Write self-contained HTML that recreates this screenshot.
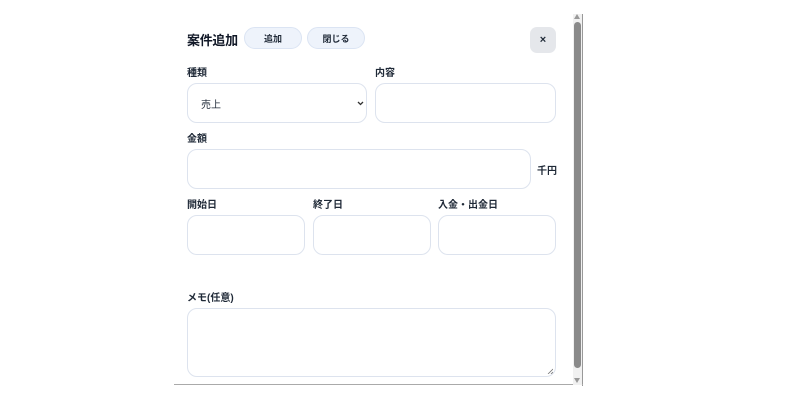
<!DOCTYPE html>
<html><head><meta charset="utf-8"><style>
*{box-sizing:border-box;margin:0;padding:0}
body{width:800px;height:400px;background:#fff;font-family:"Liberation Sans","Noto Sans CJK JP",sans-serif;color:#1f2937;position:relative;overflow:hidden}
.a{position:absolute}
.lbl{font-size:10px;font-weight:bold;color:#1f2937}
.box{position:absolute;border:1px solid #dde3ee;border-radius:10px;background:#fff}
.btn{position:absolute;background:#eef3fb;border:1px solid #dbe4f3;border-radius:11px;font-size:9px;font-weight:bold;display:flex;align-items:center;justify-content:center}
</style></head><body>
<div class="a" style="left:582px;top:14px;width:1px;height:372px;background:#999"></div>
<div class="a" style="left:174px;top:384px;width:409px;height:1px;background:#aaa"></div>
<div class="a" style="left:573px;top:14px;width:9px;height:371px;background:#f1f1f1"></div>
<div class="a" style="left:574px;top:22px;width:7px;height:346px;background:#8a8a8a;border-radius:4px"></div>
<div class="a" style="left:574px;top:14px;width:0;height:0;border-left:3.5px solid transparent;border-right:3.5px solid transparent;border-bottom:5px solid #999"></div>
<div class="a" style="left:574px;top:378px;width:0;height:0;border-left:3.5px solid transparent;border-right:3.5px solid transparent;border-top:5px solid #999"></div>

<div class="a" style="left:187px;top:30px;font-size:13px;font-weight:700;letter-spacing:-0.3px;color:#111827">案件追加</div>
<div class="btn" style="left:244px;top:27px;width:58px;height:22px">追加</div>
<div class="btn" style="left:307px;top:27px;width:58px;height:22px">閉じる</div>
<div class="a" style="left:530px;top:27px;width:26px;height:26px;background:#e5e7eb;border-radius:7px;font-size:11px;font-weight:bold;display:flex;align-items:center;justify-content:center">×</div>

<div class="a lbl" style="left:187px;top:64px">種類</div>
<div class="a lbl" style="left:375px;top:64px">内容</div>
<div class="box" style="left:187px;top:83px;width:180px;height:40px"><span class="a" style="left:13px;top:12px;font-size:10px">売上</span><svg class="a" style="left:169px;top:17px" width="7" height="5" viewBox="0 0 7 5"><path d="M1 1l2.5 2.5L6 1" stroke="#333" stroke-width="1.3" fill="none"/></svg></div>
<div class="box" style="left:375px;top:83px;width:181px;height:40px"></div>

<div class="a lbl" style="left:187px;top:130px">金額</div>
<div class="box" style="left:187px;top:149px;width:344px;height:40px"></div>
<div class="a" style="left:537px;top:162px;font-size:10px;font-weight:bold">千円</div>

<div class="a lbl" style="left:187px;top:196px">開始日</div>
<div class="a lbl" style="left:313px;top:196px">終了日</div>
<div class="a lbl" style="left:438px;top:196px">入金・出金日</div>
<div class="box" style="left:187px;top:215px;width:118px;height:40px"></div>
<div class="box" style="left:313px;top:215px;width:118px;height:40px"></div>
<div class="box" style="left:438px;top:215px;width:118px;height:40px"></div>

<div class="a lbl" style="left:187px;top:289px">メモ(任意)</div>
<div class="box" style="left:187px;top:308px;width:369px;height:69px"><svg class="a" style="right:2px;bottom:2px" width="6" height="6"><path d="M1 6L6 1M4 6L6 4" stroke="#777" stroke-width="0.8"/></svg></div>
</body></html>
